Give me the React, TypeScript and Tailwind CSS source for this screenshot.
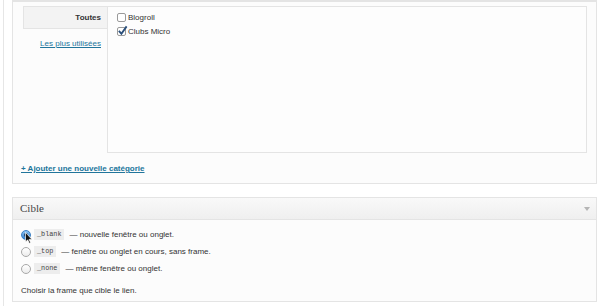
const Radio = ({ checked = false }: { checked?: boolean }) => (
  <span
    className={
      checked
        ? "flex h-[10px] w-[10px] shrink-0 items-center justify-center rounded-full border border-[#3b7fc4] bg-gradient-to-b from-[#8dc3f2] to-[#2f80d1]"
        : "flex h-[10px] w-[10px] shrink-0 items-center justify-center rounded-full border border-[#a8a8a8] bg-gradient-to-b from-white to-[#ececec]"
    }
  >
    {checked && <span className="h-[4px] w-[4px] rounded-full bg-[#1c3f66]" />}
  </span>
);

const Checkbox = ({ checked = false }: { checked?: boolean }) => (
  <span className="relative flex h-[9px] w-[9px] shrink-0 rounded-[2px] border border-[#9a9a9a] bg-white">
    {checked && (
      <svg className="absolute -left-[1px] -top-[3px] h-[11px] w-[11px]" viewBox="0 0 12 12" aria-hidden="true">
        <path d="M2 6.5 L4.8 9.5 L10.5 1.5" fill="none" stroke="#2a4f7a" strokeWidth="2" />
      </svg>
    )}
  </span>
);

const TARGETS = [
  { code: "_blank", label: "— nouvelle fenêtre ou onglet.", checked: true },
  { code: "_top", label: "— fenêtre ou onglet en cours, sans frame.", checked: false },
  { code: "_none", label: "— même fenêtre ou onglet.", checked: false },
];

export default function App() {
  return (
    <div
      className="flex h-[306px] w-[611px] overflow-hidden bg-white pl-[3px] text-[8px] text-[#333]"
      style={{ fontFamily: '"Liberation Sans", Arial, sans-serif' }}
    >
      <div className="flex flex-1 flex-col border-l border-[#e6e6e6] pl-[8px] pr-[14px]">
        {/* Catégories */}
        <div className="flex h-[184px] flex-col border-x border-b border-t-2 border-[#e4e4e4] bg-[#fcfcfc] pl-[10px] pr-[9px] pt-[4px]">
          <div className="flex h-[147px]">
            <div className="flex w-[84px] shrink-0 flex-col">
              <div className="flex h-[23px] items-center justify-end border-y border-l border-[#e4e4e4] bg-[#f3f3f3] pr-[6px] font-bold text-[#333]">
                Toutes
              </div>
              <a href="#" className="mt-[9px] pr-[6px] text-right text-[#21759b] underline">
                Les plus utilisées
              </a>
            </div>
            <div className="flex flex-1 flex-col gap-[3px] border border-[#e4e4e4] bg-[#fdfdfd] pl-[9px] pt-[5px]">
              <label className="flex h-[11px] items-center gap-[2px]">
                <Checkbox />
                <span>Blogroll</span>
              </label>
              <label className="flex h-[11px] items-center gap-[2px]">
                <Checkbox checked />
                <span>Clubs Micro</span>
              </label>
            </div>
          </div>
          <a href="#" className="ml-[-2px] mt-[10px] font-bold text-[#21759b] underline">
            + Ajouter une nouvelle catégorie
          </a>
        </div>

        {/* Cible */}
        <div className="mt-[13px] flex h-[105px] flex-col border border-[#e4e4e4] bg-[#fcfcfc]">
          <div className="flex h-[22px] items-center justify-between border-b border-[#e4e4e4] bg-gradient-to-b from-[#f9f9f9] to-[#efefef] pl-[7px] pr-[6px]">
            <span
              className="text-[11px] text-[#464646]"
              style={{ fontFamily: '"Liberation Serif", "Times New Roman", serif' }}
            >
              Cible
            </span>
            <span className="h-0 w-0 border-x-[3px] border-t-[4px] border-x-transparent border-t-[#b5b5b5]" />
          </div>
          <div className="flex flex-col gap-[6px] pl-[8px] pt-[9px]">
            {TARGETS.map((t) => (
              <label key={t.code} className="relative flex h-[11px] items-center gap-[3px]">
                <Radio checked={t.checked} />
                <code
                  className="bg-[#ededed] px-[3px] text-[6.8px] leading-[11px] text-[#444]"
                  style={{ fontFamily: '"Liberation Mono", "Courier New", monospace' }}
                >
                  {t.code}
                </code>
                <span className="ml-[2px]">{t.label}</span>
                {t.checked && (
                  <svg className="absolute left-[4px] top-[3px] h-[12px] w-[8px]" viewBox="0 0 8 12" aria-hidden="true">
                    <path d="M0.5 0.5 L0.5 10 L2.7 7.8 L4.3 11.3 L5.6 10.7 L4.1 7.4 L7 7.4 Z" fill="#111" stroke="#fff" strokeWidth="0.7" />
                  </svg>
                )}
              </label>
            ))}
            <p className="mt-[5px]">Choisir la frame que cible le lien.</p>
          </div>
        </div>
      </div>
    </div>
  );
}
